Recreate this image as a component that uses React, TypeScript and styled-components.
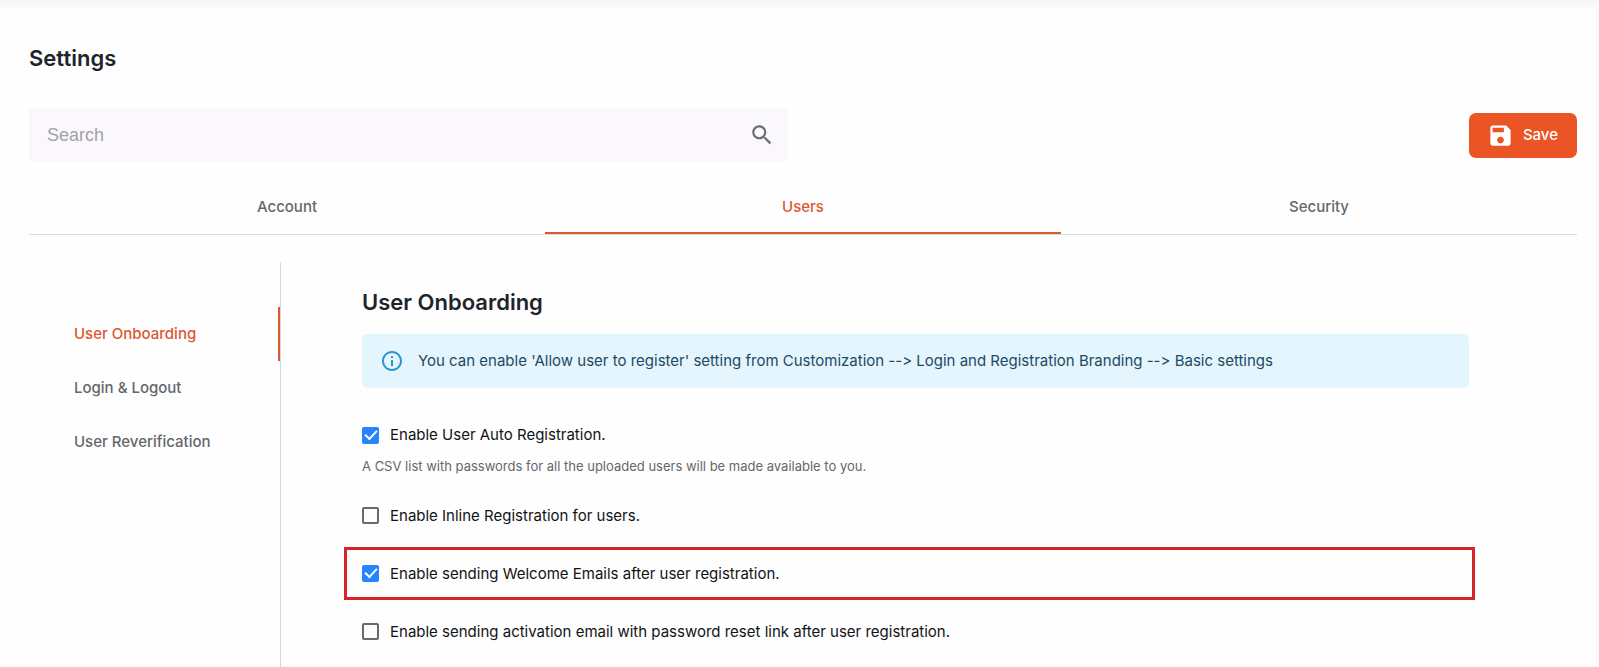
import React, { useState } from 'react';
import styled, { createGlobalStyle } from 'styled-components';

const colors = {
  accent: '#eb5424',
  accentText: '#dc5732',
  heading: '#1f242a',
  muted: '#65676b',
  line: '#dadadd',
  highlight: '#d9232b',
};

const GlobalStyle = createGlobalStyle`
  *, *::before, *::after { box-sizing: border-box; }
  html, body { margin: 0; }
  body {
    background: #fefefe;
    color: #111315;
    font-family: Inter, Roboto, sans-serif;
    font-size: 15px;
    line-height: 24px;
    font-variant-ligatures: no-contextual;
  }
  html, body, #root { height: 100%; }
  button, input { font: inherit; }
`;

const Page = styled.main`
  display: flex;
  flex-direction: column;
  min-height: 100%;
  padding: 38px 19px 0 29px;
  border-top: 4px solid #f6f6f6;
  border-right: 3px solid #f9f9fa;
  box-shadow: inset 0 4px 0 #fafafa;
`;

const PageTitle = styled.h1`
  margin: 0;
  color: ${colors.heading};
  font-size: 22px;
  font-weight: 600;
  line-height: 32px;
`;

const Toolbar = styled.div`
  display: flex;
  align-items: center;
  justify-content: space-between;
  margin-top: 34px;
`;

const SearchBox = styled.form`
  display: flex;
  align-items: center;
  flex: 0 0 49%;
  height: 54px;
  padding: 0 13px 0 18px;
  border-radius: 4px;
  background: #faf8fc;
`;

const SearchInput = styled.input`
  flex: 1;
  min-width: 0;
  padding: 0;
  border: 0;
  outline: 0;
  background: transparent;
  color: ${colors.heading};
  font-family: 'Liberation Sans', Arial, sans-serif;
  font-size: 18px;
  &::placeholder { color: #a3a2a6; opacity: 1; }
`;

const SearchButton = styled.button`
  display: flex;
  padding: 0;
  border: 0;
  background: none;
  color: #6d6c70;
  cursor: pointer;
`;

const SaveButton = styled.button`
  display: flex;
  align-items: center;
  gap: 9px;
  height: 45px;
  padding: 0 19px 0 18px;
  border: 0;
  border-radius: 7px;
  background: ${colors.accent};
  color: #fff;
  font-weight: 500;
  cursor: pointer;
`;

const Tabs = styled.div`
  display: grid;
  grid-template-columns: repeat(3, 1fr);
  margin-top: 16px;
  border-bottom: 1px solid ${colors.line};
`;

const Tab = styled.button<{ $active: boolean }>`
  height: 56px;
  padding: 4px 0 0;
  border: 0;
  border-bottom: 2px solid ${p => (p.$active ? colors.accentText : 'transparent')};
  background: none;
  color: ${p => (p.$active ? colors.accentText : colors.muted)};
  font-weight: 500;
  cursor: pointer;
`;

const Body = styled.div`
  display: flex;
  flex: 1;
  margin-top: 27px;
`;

const SideNav = styled.nav`
  flex: 0 0 252px;
  padding-top: 45px;
  border-right: 1px solid ${colors.line};
`;

const SideLink = styled.a<{ $active: boolean }>`
  display: flex;
  align-items: center;
  height: 54px;
  padding-left: 45px;
  border-right: 2px solid ${p => (p.$active ? colors.accentText : 'transparent')};
  color: ${p => (p.$active ? colors.accentText : colors.muted)};
  font-weight: 500;
  text-decoration: none;
`;

const Content = styled.section`
  flex: 1;
  min-width: 0;
  margin: 0 108px 0 81px;
  padding-top: 24px;
`;

const SectionTitle = styled(PageTitle).attrs({ as: 'h2' })``;

const InfoBanner = styled.div`
  display: flex;
  align-items: center;
  gap: 14px;
  min-height: 54px;
  margin: 16px 0 32px;
  padding: 0 18px;
  border-radius: 5px;
  background: #e4f5fe;
  color: #1d4a63;
`;

const Option = styled.div<{ $highlighted?: boolean }>`
  display: flex;
  flex-direction: column;
  justify-content: center;
  min-height: 53px;
  margin: 0 -6px 5px -18px;
  padding-left: 15px;
  border: 3px solid ${p => (p.$highlighted ? colors.highlight : 'transparent')};
`;

const OptionLabel = styled.label`
  display: flex;
  align-items: center;
  gap: 11px;
  cursor: pointer;
`;

const Checkbox = styled.input.attrs({ type: 'checkbox' })`
  appearance: none;
  display: grid;
  place-content: center;
  width: 17px;
  height: 17px;
  margin: 0;
  border: 2px solid #6b686e;
  border-radius: 2px;
  background: #fdfcfe;
  cursor: pointer;
  &:checked { border-color: #2684ff; background: #2684ff; }
  &:checked::before {
    content: '';
    width: 12px;
    height: 7px;
    margin-bottom: 4px;
    border: solid #fff;
    border-width: 0 0 2px 2px;
    transform: rotate(-47deg);
  }
`;

const HelpText = styled.p`
  margin: 7px 0 3px;
  color: ${colors.muted};
  font-size: 13px;
`;

const SearchIcon = () => (
  <svg width="26" height="26" viewBox="0 0 24 24" fill="currentColor" aria-hidden="true">
    <path d="M15.5 14h-.79l-.28-.27C15.41 12.59 16 11.11 16 9.5 16 5.91 13.09 3 9.5 3S3 5.91 3 9.5 5.91 16 9.5 16c1.61 0 3.09-.59 4.23-1.57l.27.28v.79l5 4.99L20.49 19l-4.99-5zm-6 0C7.01 14 5 11.99 5 9.5S7.01 5 9.5 5 14 7.01 14 9.5 11.99 14 9.5 14z" />
  </svg>
);

const SaveIcon = () => (
  <svg width="27" height="27" viewBox="0 0 24 24" fill="currentColor" aria-hidden="true">
    <path d="M17 3H5c-1.11 0-2 .9-2 2v14c0 1.1.89 2 2 2h14c1.1 0 2-.9 2-2V7l-4-4zm-5 16c-1.66 0-3-1.34-3-3s1.34-3 3-3 3 1.34 3 3-1.34 3-3 3zm3-10H5V5h10v4z" />
  </svg>
);

const InfoIcon = () => (
  <svg width="24" height="24" viewBox="0 0 24 24" fill="#2d94cd" aria-hidden="true">
    <path d="M11 7h2v2h-2zm0 4h2v6h-2zm1-9C6.48 2 2 6.48 2 12s4.48 10 10 10 10-4.48 10-10S17.52 2 12 2zm0 18c-4.41 0-8-3.59-8-8s3.59-8 8-8 8 3.59 8 8-3.59 8-8 8z" />
  </svg>
);

const tabs = ['Account', 'Users', 'Security'];
const sections = ['User Onboarding', 'Login & Logout', 'User Reverification'];
const options = [
  {
    label: 'Enable User Auto Registration.',
    help: 'A CSV list with passwords for all the uploaded users will be made available to you.',
    checked: true,
  },
  { label: 'Enable Inline Registration for users.', checked: false },
  { label: 'Enable sending Welcome Emails after user registration.', checked: true, highlighted: true },
  {
    label: 'Enable sending activation email with password reset link after user registration.',
    checked: false,
  },
];

export default function App() {
  const [activeTab, setActiveTab] = useState('Users');
  const [activeSection, setActiveSection] = useState('User Onboarding');

  return (
    <>
      <GlobalStyle />
      <Page>
        <PageTitle>Settings</PageTitle>
        <Toolbar>
          <SearchBox role="search" onSubmit={e => e.preventDefault()}>
            <SearchInput type="text" placeholder="Search" aria-label="Search" />
            <SearchButton type="submit" aria-label="Search">
              <SearchIcon />
            </SearchButton>
          </SearchBox>
          <SaveButton type="button">
            <SaveIcon />
            Save
          </SaveButton>
        </Toolbar>
        <Tabs role="tablist">
          {tabs.map(tab => (
            <Tab
              key={tab}
              type="button"
              role="tab"
              aria-selected={tab === activeTab}
              $active={tab === activeTab}
              onClick={() => setActiveTab(tab)}
            >
              {tab}
            </Tab>
          ))}
        </Tabs>
        <Body>
          <SideNav>
            {sections.map(section => (
              <SideLink
                key={section}
                href="#"
                $active={section === activeSection}
                onClick={() => setActiveSection(section)}
              >
                {section}
              </SideLink>
            ))}
          </SideNav>
          <Content>
            <SectionTitle>User Onboarding</SectionTitle>
            <InfoBanner role="note">
              <InfoIcon />
              You can enable 'Allow user to register' setting from Customization --&gt; Login and
              Registration Branding --&gt; Basic settings
            </InfoBanner>
            {options.map(option => (
              <Option key={option.label} $highlighted={option.highlighted}>
                <OptionLabel>
                  <Checkbox defaultChecked={option.checked} />
                  {option.label}
                </OptionLabel>
                {option.help && <HelpText>{option.help}</HelpText>}
              </Option>
            ))}
          </Content>
        </Body>
      </Page>
    </>
  );
}
